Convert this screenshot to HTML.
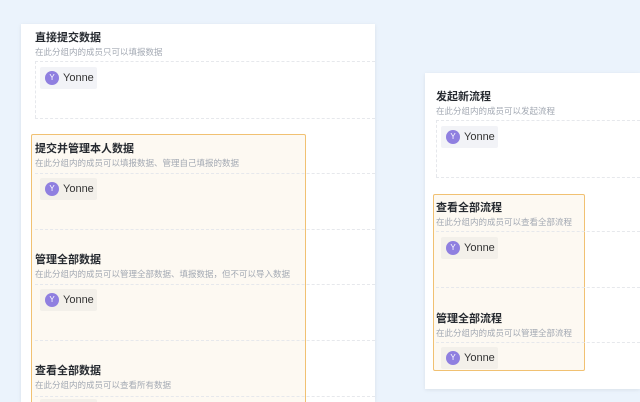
<!DOCTYPE html>
<html><head><meta charset="utf-8"><style>
*{margin:0;padding:0;box-sizing:border-box}
html,body{width:640px;height:402px;overflow:hidden}
body{background:#ebf3fc;position:relative;font-family:"Liberation Sans","Noto Sans CJK SC",sans-serif}
.card{position:absolute;background:#fff;box-shadow:0 1px 4px rgba(0,0,0,.08)}
.hl{position:absolute;background:#fdf9f2;border:1.5px solid #f1c172;border-radius:2px}
.dl{position:absolute;border-top:1px dashed #e6e8ec;height:0}
.dv{position:absolute;border-left:1px dashed #e6e8ec;width:0}
.t{position:absolute;font-size:11px;font-weight:bold;color:#262a30;white-space:nowrap;line-height:13px}
.s{position:absolute;font-size:8.5px;color:#a3a9b3;white-space:nowrap;line-height:10px}
.c{position:absolute;height:22px;width:57px;background:#f2f3f7;border-radius:2px;font-size:11px;color:#333;line-height:22px;padding-left:23px}
.c i{position:absolute;left:5px;top:4px;width:14px;height:14px;border-radius:50%;background:#8f7fe0;color:#fff;font-style:normal;font-size:8px;line-height:14px;text-align:center}
</style></head><body>
<div class="card" style="left:21px;top:24px;width:354px;height:378px"></div>
<div class="card" style="left:425px;top:73px;width:215px;height:316px"></div>
<div class="hl" style="left:31px;top:134px;width:275px;height:270px"></div>
<div class="hl" style="left:433px;top:194px;width:152px;height:177px"></div>

<div class="dl" style="left:35px;top:61px;width:340px"></div>
<div class="dl" style="left:35px;top:118px;width:340px"></div>
<div class="dl" style="left:35px;top:173px;width:340px"></div>
<div class="dl" style="left:35px;top:229px;width:340px"></div>
<div class="dl" style="left:35px;top:284px;width:340px"></div>
<div class="dl" style="left:35px;top:340px;width:340px"></div>
<div class="dl" style="left:35px;top:396px;width:340px"></div>
<div class="dv" style="left:35px;top:61px;height:57px"></div>

<div class="dl" style="left:436px;top:120px;width:204px"></div>
<div class="dl" style="left:436px;top:177px;width:204px"></div>
<div class="dl" style="left:436px;top:231px;width:204px"></div>
<div class="dl" style="left:436px;top:287px;width:204px"></div>
<div class="dl" style="left:436px;top:342px;width:204px"></div>
<div class="dv" style="left:436px;top:120px;height:57px"></div>

<div class="t" style="left:35px;top:32px">直接提交数据</div>
<div class="s" style="left:35px;top:47px">在此分组内的成员只可以填报数据</div>
<div class="c" style="left:40px;top:67px"><i>Y</i>Yonne</div>

<div class="t" style="left:35px;top:143px">提交并管理本人数据</div>
<div class="s" style="left:35px;top:158px">在此分组内的成员可以填报数据、管理自己填报的数据</div>
<div class="c" style="left:40px;top:178px;background:#f3f0ea"><i>Y</i>Yonne</div>

<div class="t" style="left:35px;top:254px">管理全部数据</div>
<div class="s" style="left:35px;top:269px">在此分组内的成员可以管理全部数据、填报数据，但不可以导入数据</div>
<div class="c" style="left:40px;top:289px;background:#f3f0ea"><i>Y</i>Yonne</div>

<div class="t" style="left:35px;top:365px">查看全部数据</div>
<div class="s" style="left:35px;top:380px">在此分组内的成员可以查看所有数据</div>
<div class="c" style="left:40px;top:399px;background:#f3f0ea"><i>Y</i>Yonne</div>

<div class="t" style="left:436px;top:91px">发起新流程</div>
<div class="s" style="left:436px;top:106px">在此分组内的成员可以发起流程</div>
<div class="c" style="left:441px;top:126px"><i>Y</i>Yonne</div>

<div class="t" style="left:436px;top:202px">查看全部流程</div>
<div class="s" style="left:436px;top:217px">在此分组内的成员可以查看全部流程</div>
<div class="c" style="left:441px;top:237px;background:#f3f0ea"><i>Y</i>Yonne</div>

<div class="t" style="left:436px;top:313px">管理全部流程</div>
<div class="s" style="left:436px;top:328px">在此分组内的成员可以管理全部流程</div>
<div class="c" style="left:441px;top:347px;background:#f3f0ea"><i>Y</i>Yonne</div>
</body></html>
